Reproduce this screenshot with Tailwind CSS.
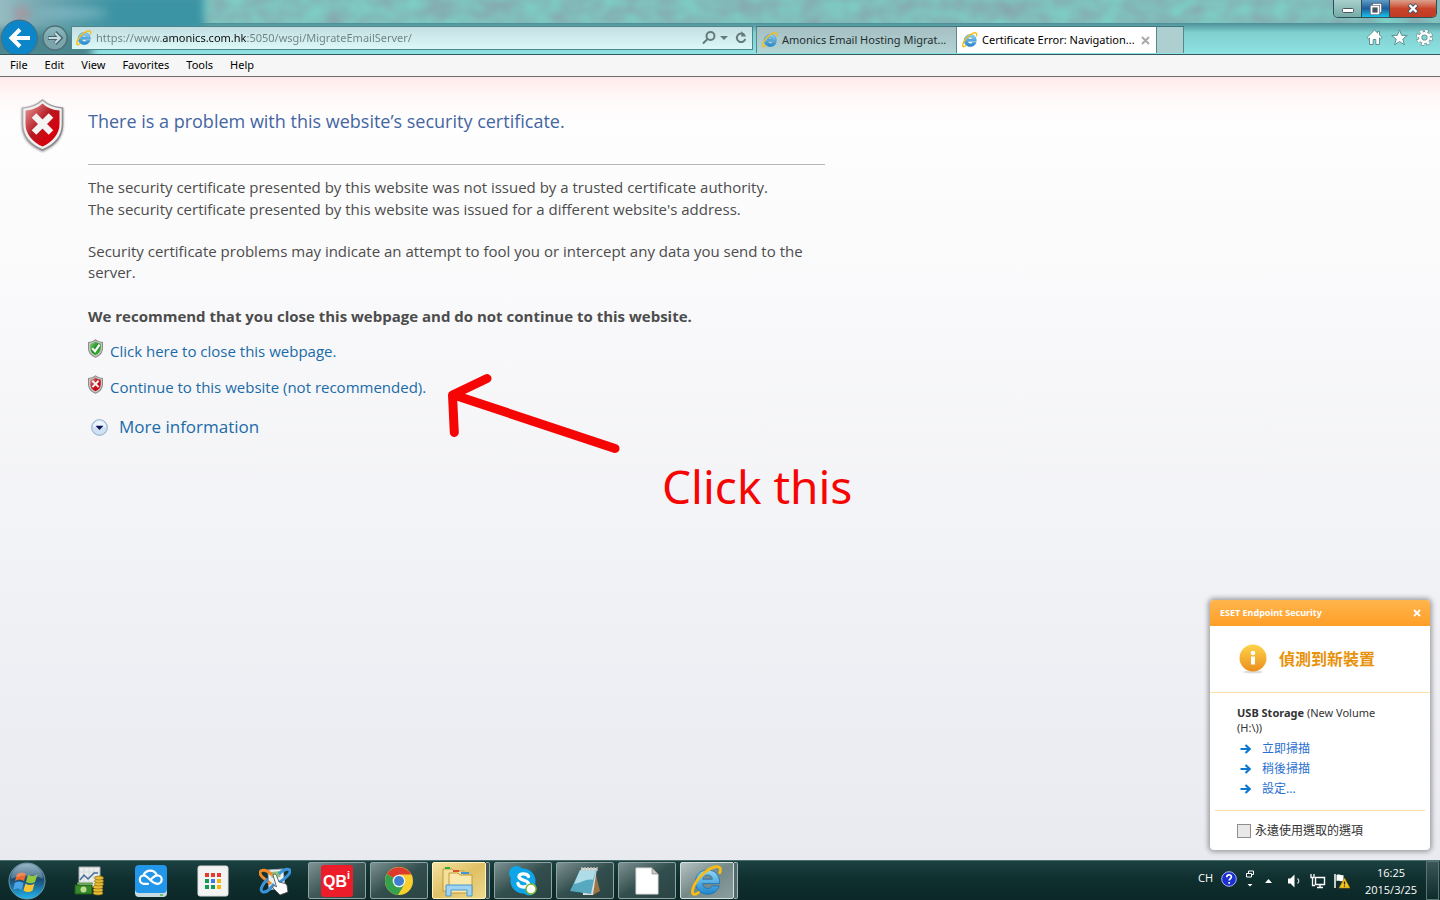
<!DOCTYPE html>
<html lang="en">
<head>
<meta charset="utf-8">
<title>Certificate Error: Navigation Blocked</title>
<script src="https://cdn.jsdelivr.net/npm/@tailwindcss/browser@4"></script>
</head>
<body class="flex h-screen flex-col overflow-hidden bg-[#0f2b2b] font-['Noto_Sans','Noto_Sans_CJK_TC',sans-serif] text-xs text-black">

<svg class="absolute size-0" aria-hidden="true">
  <defs>
    <linearGradient id="ieBlue" x1="0" y1="0" x2="0" y2="1"><stop offset="0" stop-color="#8fd8f8"/><stop offset="1" stop-color="#1f86cf"/></linearGradient>
    <linearGradient id="redShield" x1="0" y1="0" x2="1" y2="1"><stop offset="0" stop-color="#e9a0a0"/><stop offset=".45" stop-color="#b51a22"/><stop offset=".75" stop-color="#d8000c"/><stop offset="1" stop-color="#a30008"/></linearGradient>
    <linearGradient id="greenShield" x1="0" y1="0" x2="1" y2="1"><stop offset="0" stop-color="#8fd08a"/><stop offset=".5" stop-color="#1f8f1f"/><stop offset="1" stop-color="#3fc23a"/></linearGradient>
    <linearGradient id="silver" x1="0" y1="0" x2="1" y2="1"><stop offset="0" stop-color="#b9b9b9"/><stop offset="1" stop-color="#7d7d7d"/></linearGradient>
    <linearGradient id="orb" x1="0" y1="0" x2="0" y2="1"><stop offset="0" stop-color="#7ea6b8"/><stop offset=".45" stop-color="#1b4a70"/><stop offset="1" stop-color="#22b5ee"/></linearGradient>
    <linearGradient id="amber" x1="0" y1="0" x2="0" y2="1"><stop offset="0" stop-color="#ffd34a"/><stop offset="1" stop-color="#ea8f1e"/></linearGradient>
  </defs>
  <symbol id="ie" viewBox="0 0 32 32">
    <path d="M28.6 18.6H11.6c.2 3 2.3 4.800 5 4.800 2 0 3.500-.9 4.300-2.500h7.300c-1.500 5-6 8.300-11.600 8.300C9.500 29.200 4.400 24.200 4.400 17.200S9.500 5 16.600 5c7.300 0 12.400 5 12 13.600zM11.800 14.200h9.600c-.3-2.600-2.200-4.300-4.700-4.300s-4.500 1.700-4.900 4.300z" fill="url(#ieBlue)" stroke="#1b6fb0" stroke-width=".8"/>
    <path d="M7.500 27.500c-3.500 3-6.500 2.600-6-1.500C2.300 18.500 12 6.500 21.500 2.600c5.500-2.200 9.500-.8 7.300 5.200" fill="none" stroke="#f6bd16" stroke-width="2.800" stroke-linecap="round"/>
  </symbol>
  <symbol id="shieldRed" viewBox="0 0 43 52">
    <path d="M21.500 1C15 7 8 8.500 1.500 9v16c0 12 8 21 20 26 12-5 20-14 20-26V9C35 8.500 28 7 21.500 1z" fill="#f0f0f0" stroke="url(#silver)" stroke-width="1.600"/>
    <path d="M21.500 4.500C16 9.500 10 11 4.500 11.500V25c0 10 7 18 17 22.500C31.500 43 38.500 35 38.500 25V11.500C33 11 27 9.500 21.500 4.500z" fill="url(#redShield)"/>
    <path d="M13 16.500l17 17m0-17l-17 17" stroke="#f3f3f3" stroke-width="6.500"/>
  </symbol>
  <symbol id="shieldRedSmall" viewBox="0 0 43 52">
    <path d="M21.500 1C15 7 8 8.500 1.500 9v16c0 12 8 21 20 26 12-5 20-14 20-26V9C35 8.500 28 7 21.500 1z" fill="#c9c9c9" stroke="#8c8c8c" stroke-width="3"/>
    <path d="M21.500 6C16 10.500 11 12 6.500 12.500V25c0 9 6 16 15 20C30.500 41 36.500 34 36.500 25V12.500C32 12 27 10.500 21.500 6z" fill="url(#redShield)"/>
    <path d="M12.500 15.500l18 18m0-18l-18 18" stroke="#f3f3f3" stroke-width="6"/>
  </symbol>
  <symbol id="shieldGreen" viewBox="0 0 43 52">
    <path d="M21.500 1C15 7 8 8.500 1.500 9v16c0 12 8 21 20 26 12-5 20-14 20-26V9C35 8.500 28 7 21.500 1z" fill="#c9c9c9" stroke="#8c8c8c" stroke-width="3"/>
    <path d="M21.500 6C16 10.500 11 12 6.500 12.500V25c0 9 6 16 15 20C30.500 41 36.500 34 36.500 25V12.500C32 12 27 10.500 21.500 6z" fill="url(#greenShield)"/>
    <path d="M12 25l8 9 13-19" fill="none" stroke="#fff" stroke-width="6"/>
  </symbol>
  <symbol id="arrowRight" viewBox="0 0 11 10"><path d="M0 5h8M5 1l4.200 4L5 9" fill="none" stroke="#0a78d0" stroke-width="2.200"/></symbol>
</svg>

<header class="relative isolate flex h-[55px] shrink-0 overflow-hidden border-b border-[#35565a] bg-[#84c9c5]">
  <svg class="absolute inset-0 -z-10 h-full w-full" aria-hidden="true">
    <defs>
      <filter id="glass" x="0" y="0" width="100%" height="100%" color-interpolation-filters="sRGB">
        <feTurbulence type="fractalNoise" baseFrequency=".04 .055" numOctaves="2" seed="8"/>
        <feColorMatrix values=".05 0 0 0 .48  -.22 0 0 0 .85  -.14 0 0 0 .8  0 0 0 0 1"/>
      </filter>
      <linearGradient id="strip" x1="0" y1="0" x2="0" y2="1"><stop offset="0" stop-color="#4d8f97"/><stop offset=".3" stop-color="#7fd0cf"/><stop offset="1" stop-color="#8fe4e4"/></linearGradient>
      <linearGradient id="ghost" x1="0" y1="0" x2="1" y2="0"><stop offset="0" stop-color="#a5c5c9"/><stop offset=".25" stop-color="#7aaab3"/><stop offset=".6" stop-color="#3c93a3"/><stop offset="1" stop-color="#3a94a4"/></linearGradient>
      <filter id="soft" x="-20%" y="-60%" width="140%" height="220%"><feGaussianBlur stdDeviation="4"/></filter>
    </defs>
    <rect width="100%" height="26" filter="url(#glass)"/>
    <rect y="23" width="100%" height="32" fill="url(#strip)"/>
    <rect x="-20" y="-6" width="224" height="38" fill="url(#ghost)" filter="url(#soft)"/>
    <rect x="-20" y="30" width="112" height="30" fill="#4c858d" filter="url(#soft)"/>
    <circle cx="22" cy="14" r="8" fill="#b08d96" opacity=".7" filter="url(#soft)"/>
    <ellipse cx="72" cy="13" rx="36" ry="4" fill="#8fc4d0" opacity=".6" filter="url(#soft)"/>
  </svg>

  <nav class="flex w-[71px] shrink-0 items-start gap-1 pt-[19px]" aria-label="History">
    <button class="size-[38px] shrink-0" aria-label="Back">
      <svg viewBox="0 0 38 38" class="size-full"><circle cx="19.500" cy="19" r="18" fill="#0c86c8" stroke="#4b6d7c" stroke-width="1"/><path d="M30 19H12.500M20 10.500L11.500 19l8.500 8.500" fill="none" stroke="#fff" stroke-width="4"/></svg>
    </button>
    <button class="mt-[6px] size-[26px] shrink-0" aria-label="Forward">
      <svg viewBox="0 0 26 26" class="size-full"><circle cx="13" cy="13" r="12" fill="#ffffff44" stroke="#4e6f76" stroke-width="1.400"/><path d="M6 13h12M13 7.500l5.500 5.500-5.500 5.500" fill="none" stroke="#43666c" stroke-width="4"/><path d="M6.500 13H18M13 8l5 5-5 5" fill="none" stroke="#c7dcde" stroke-width="2"/></svg>
    </button>
  </nav>

  <form class="mt-[26px] flex h-6 min-w-0 flex-1 items-center border border-[#4f868b] bg-linear-to-b from-[#c4dfe2] to-[#dcf8f8] pl-1 pr-1">
    <svg class="size-4 shrink-0"><use href="#ie"/></svg>
    <input type="text" aria-label="Address" value="https://www.amonics.com.hk:5050/wsgi/MigrateEmailServer/" class="ml-1 min-w-0 flex-1 bg-[linear-gradient(90deg,#6c8083_0_67px,#0a0a0a_67px_151px,#6c8083_151px)] bg-clip-text text-[11px] text-transparent outline-none">
    <button type="button" class="flex h-full items-center" aria-label="Search"><svg class="size-4" viewBox="0 0 16 16" fill="none" stroke="#647a7c" stroke-width="2"><circle cx="10.500" cy="6" r="4"/><path d="M7.500 9L3 13.500"/></svg></button>
    <button type="button" class="flex h-full w-4 items-center justify-center" aria-label="Address list"><svg class="h-1 w-2" viewBox="0 0 8 4"><path d="M0 0h8L4 4z" fill="#647a7c"/></svg></button>
    <button type="button" class="flex h-full items-center" aria-label="Refresh"><svg class="size-4" viewBox="0 0 16 16"><path d="M12.500 5A4.300 4.300 0 1 0 13.300 9" fill="none" stroke="#647a7c" stroke-width="2"/><path d="M9.300 6.500V1l5 5.500z" fill="#647a7c"/></svg></button>
  </form>

  <div class="ml-[3px] mt-[26px] flex h-[27px] shrink-0 border-t border-[#3d777d]" role="tablist">
    <button role="tab" aria-selected="false" class="flex w-[200px] items-center gap-1 border-l border-[#528a8f] bg-linear-to-b from-[#a5bec2] to-[#b3d5d4] pl-[5px] text-left text-[11px] text-[#1f2f30]">
      <svg class="size-4 shrink-0"><use href="#ie"/></svg><span class="whitespace-nowrap">Amonics Email Hosting Migrat...</span>
    </button>
    <div class="flex w-[200px] items-center border-l border-[#528a8f] bg-white pl-[5px]">
      <button role="tab" aria-selected="true" class="flex items-center gap-1 text-[11px]"><svg class="size-4 shrink-0"><use href="#ie"/></svg><span class="w-[156px] whitespace-nowrap text-left">Certificate Error: Navigation...</span></button>
      <button class="ml-[3px]" aria-label="Close tab"><svg class="size-[9px]" viewBox="0 0 9 9"><path d="M1 1l7 7m0-7L1 8" stroke="#a9a9a9" stroke-width="2"/></svg></button>
    </div>
    <button class="w-7 border-x border-[#528a8f] bg-[#adcfcf]" aria-label="New tab"></button>
  </div>

  <div class="flex w-[256px] shrink-0 flex-col items-end">
    <div class="mr-[3px] flex h-[18px] overflow-hidden rounded-b-[5px] border border-t-0 border-[#2d4f55]">
      <button class="flex w-[28px] items-center justify-center border-r border-[#2d4f55] bg-linear-to-b from-[#a8cfcb] to-[#76aba8]" aria-label="Minimize"><svg class="h-[18px] w-3" viewBox="0 0 12 18"><rect x=".5" y="8.500" width="11" height="4" rx="1" fill="#fff" stroke="#4a5560"/></svg></button>
      <button class="flex w-[27px] items-center justify-center bg-linear-to-b from-[#5f9dc4] via-[#1d5d9c] to-[#10c4ee]" aria-label="Restore"><svg class="size-3" viewBox="0 0 12 12" fill="none"><path d="M3.500 3V1.500h7v7H9" stroke="#4a5560" stroke-width="3"/><path d="M3.500 3V1.500h7v7H9" stroke="#fff" stroke-width="1.500"/><rect x="1.500" y="3.500" width="7" height="7" fill="#456" stroke="#4a5560" stroke-width="3"/><rect x="1.500" y="3.500" width="7" height="7" stroke="#fff" stroke-width="1.800"/></svg></button>
      <button class="flex w-[47px] items-center justify-center border-l border-[#2d4f55] bg-linear-to-b from-[#dba08e] via-[#c9442a] to-[#c23a22]" aria-label="Close"><svg class="h-[11px] w-3" viewBox="0 0 12 11"><path d="M2 1.500l8 8m0-8l-8 8" stroke="#4a5560" stroke-width="4.200"/><path d="M2.500 2l7 7m0-7l-7 7" stroke="#fff" stroke-width="2.400"/></svg></button>
    </div>
    <div class="mr-[7px] mt-[11px] flex gap-2 text-white">
      <button aria-label="Home"><svg class="size-[17px]" viewBox="0 0 17 17"><path d="M8.500 1L1 8.500l1.500 1.300 1-.9V15.500h3.700v-5h2.600v5h3.700V8.900l1 .9L16 8.500l-2.500-2.600V2.500h-2v1.400z" fill="#fff" stroke="#5d8f92"/></svg></button>
      <button aria-label="Favorites"><svg class="size-[17px]" viewBox="0 0 17 17"><path d="M8.500.8l2.100 5.500 5.700.2-4.500 3.600 1.600 5.700-4.900-3.300-4.900 3.300 1.600-5.700L.7 6.500l5.700-.2z" fill="#fff" stroke="#5d8f92"/></svg></button>
      <button aria-label="Tools"><svg class="size-[17px]" viewBox="0 0 17 17"><circle cx="8.500" cy="8.500" r="6.500" fill="none" stroke="#6e9092" stroke-width="4" stroke-dasharray="3.100 2"/><circle cx="8.500" cy="8.500" r="4.300" fill="none" stroke="#6e9092" stroke-width="4"/><circle cx="8.500" cy="8.500" r="6.500" fill="none" stroke="#fff" stroke-width="2.600" stroke-dasharray="2.500 2.600"/><circle cx="8.500" cy="8.500" r="4.300" fill="none" stroke="#fff" stroke-width="2.400"/></svg></button>
    </div>
  </div>
</header>

<nav class="flex h-[22px] shrink-0 items-center gap-[17px] border-b border-[#6d6d6d] bg-[#f6f6f6] pl-[10px] text-[11px]" aria-label="Menu bar">
  <button>File</button><button>Edit</button><button>View</button><button>Favorites</button><button>Tools</button><button>Help</button>
</nav>

<main class="relative min-h-0 flex-1 bg-[linear-gradient(180deg,#ffeaea_0,#fff9f9_22px,#fefefe_45px,#e9eaf0_100%)]">
  <div class="flex gap-6 pl-[21px] pt-[22px]">
    <svg class="h-[52px] w-[43px] shrink-0 drop-shadow-[0_1px_1px_#0006]"><use href="#shieldRed"/></svg>
    <article class="max-w-[737px] flex-1 font-['Open_Sans',sans-serif] text-[15px] leading-[21px] text-[#4c4c4c]">
      <h1 class="border-b border-[#b5b5bb] pb-[31px] pt-[10px] text-[18px] leading-[24px] text-[#4465a2]">There is a problem with this website’s security certificate.</h1>
      <p class="pt-[11px] leading-[22px]">The security certificate presented by this website was not issued by a trusted certificate authority.<br>The security certificate presented by this website was issued for a different website's address.</p>
      <p class="pt-[21px]">Security certificate problems may indicate an attempt to fool you or intercept any data you send to the server.</p>
      <p class="pt-[23px] font-bold">We recommend that you close this webpage and do not continue to this website.</p>
      <ul class="text-[#1a6ba8]">
        <li class="flex gap-[7px] pt-[14px]"><svg class="-mt-[2px] h-[19px] w-[15px] shrink-0"><use href="#shieldGreen"/></svg><a href="#">Click here to close this webpage.</a></li>
        <li class="flex gap-[7px] pt-[15px]"><svg class="-mt-[2px] h-[19px] w-[15px] shrink-0"><use href="#shieldRedSmall"/></svg><a href="#">Continue to this website (not recommended).</a></li>
      </ul>
      <button class="mt-[17px] flex items-center gap-[11px] pl-[3px] text-[17px] leading-6 text-[#1a6ba8]">
        <svg class="size-[17px]" viewBox="0 0 17 17"><circle cx="8.500" cy="8.500" r="7.800" fill="#cfe2f4" stroke="#8ba6c6"/><path d="M2 8a6.500 6.500 0 0 1 13 0z" fill="#edf5fc"/><path d="M4.500 6.800h8l-4 4.200z" fill="#101058"/></svg>
        More information
      </button>
    </article>
  </div>

  <!-- Hand-drawn annotation over the page -->
  <svg class="absolute left-[440px] top-[290px] h-[100px] w-[190px]" viewBox="0 0 190 100" fill="none" stroke="#f60505" stroke-width="9" stroke-linecap="round" stroke-linejoin="round" aria-hidden="true"><path d="M47 11.500L12.500 28l1.800 37.500M14 28L175 81.500"/></svg>
  <p class="absolute left-[662px] top-[379px] whitespace-nowrap text-[46px] leading-[60px] text-[#f60505]">Click this</p>

  <section class="absolute bottom-[10px] right-[10px] w-[220px] rounded-[4px] bg-white shadow-[0_0_5px_2px_#0005]" aria-label="ESET Endpoint Security">
    <header class="flex h-[26px] items-center justify-between rounded-t-[4px] bg-linear-to-b from-[#ffb54b] to-[#ff9f26] pl-[10px] pr-[9px] text-[9px] font-bold text-white">
      <span>ESET Endpoint Security</span>
      <button aria-label="Close notification"><svg class="size-2" viewBox="0 0 8 8"><path d="M1 1l6 6m0-6L1 7" stroke="#fff" stroke-width="1.800"/></svg></button>
    </header>
    <div class="flex h-[67px] items-center gap-3 border-b border-[#fbdf9f] pl-[29px]">
      <svg class="h-[30px] w-7" viewBox="0 0 28 30"><ellipse cx="14" cy="28" rx="10" ry="1.500" fill="#ddd"/><circle cx="14" cy="14" r="13.500" fill="url(#amber)"/><circle cx="14" cy="9" r="2.300" fill="#fff"/><path d="M12 12.500h4v8h-4z" fill="#fff"/></svg>
      <h2 class="text-base font-bold text-[#e8920c]">偵測到新裝置</h2>
    </div>
    <div class="mx-[5px] h-[118px] border-b border-[#fbdf9f] pl-[22px] pt-3 leading-[15px] text-[#333]">
      <p class="whitespace-nowrap text-[11px]"><b>USB Storage</b> (New Volume<br>(H:\))</p>
      <ul class="pt-1 leading-5 text-[#2a6fd0]">
        <li class="flex items-center gap-[10px] pl-[3px]"><svg class="h-[10px] w-3"><use href="#arrowRight"/></svg><a href="#">立即掃描</a></li>
        <li class="flex items-center gap-[10px] pl-[3px]"><svg class="h-[10px] w-3"><use href="#arrowRight"/></svg><a href="#">稍後掃描</a></li>
        <li class="flex items-center gap-[10px] pl-[3px]"><svg class="h-[10px] w-3"><use href="#arrowRight"/></svg><a href="#">設定...</a></li>
      </ul>
    </div>
    <label class="flex h-[39px] items-center gap-1 pl-[27px] text-[#333]"><input type="checkbox" class="size-[14px] appearance-none border border-[#8e8e8e] bg-[#e8e8e8]">永遠使用選取的選項</label>
  </section>
</main>

<footer class="flex h-10 shrink-0 items-stretch border-t border-[#4c7171] bg-linear-to-b from-[#1c4040] via-[#0f2e2e] to-[#0c2828] text-white">
  <button class="flex w-[58px] items-center justify-center pr-1" aria-label="Start">
    <svg class="size-[38px]" viewBox="0 0 38 38"><circle cx="19" cy="19" r="18" fill="url(#orb)" stroke="#6e9aa8"/><path d="M9 12c3-2 6-2 9 0l-2 7c-3-2-6-2-9 0z" fill="#ee6a2c"/><path d="M20 12.500c3 2 6 2 9.500 0l-2.500 7.500c-3 2-6 1.500-9 0z" fill="#94c83c"/><path d="M6.500 21c3-2 6-2 9 0l-2 7c-3-2-5-2-8 0z" fill="#4ba4e6"/><path d="M17.500 21.500c3 2 6 2 9 0l-2 7c-3 2-6 2-9 0z" fill="#fbc52f"/><path d="M3 17a16 15 0 0 1 32 0c-8-5-20-5-32 0z" fill="#ffffff38"/></svg>
  </button>
  <button class="flex w-[62px] items-center justify-center" aria-label="Accounting"><svg class="size-8" viewBox="0 0 32 32"><path d="M6 2h21v20H6z" fill="#eceeee" stroke="#aaa"/><path d="M6 7h21M6 12h21M6 17h21M11 2v20M16 2v20M21 2v20" stroke="#c8cccc" stroke-width=".6"/><path d="M7 15l4-5 4 4 6-6h4" fill="none" stroke="#466c9c" stroke-width="1.500"/><path d="M2 20h17v9H2z" fill="#37892c" stroke="#1d5b16"/><circle cx="10.500" cy="24.500" r="3" fill="#bcdc8c"/><path d="M4 18.500h16" stroke="#66a34f" stroke-width="2"/><g fill="#e9bd32" stroke="#8d6912" stroke-width=".7"><ellipse cx="25" cy="28" rx="5" ry="2"/><ellipse cx="25" cy="25" rx="5" ry="2"/><ellipse cx="25" cy="22" rx="5" ry="2"/><ellipse cx="26" cy="19" rx="4.500" ry="2"/><ellipse cx="26" cy="16" rx="4.500" ry="2"/><ellipse cx="26" cy="13" rx="4.500" ry="2"/></g></svg></button>
  <button class="flex w-[62px] items-center justify-center" aria-label="Cloud drive"><svg class="size-8" viewBox="0 0 32 32"><rect y="3" width="32" height="29" rx="4" fill="#c9dbe2"/><rect width="32" height="28" rx="4" fill="#2296e8"/><path d="M8.500 10.500A7 7 0 0 1 21.500 9.500M13 18.800H9a4.200 4.200 0 0 1 0-8.400c4 0 7 8.400 13.500 8.400a4.200 4.200 0 0 0 0-8.400c-3 0-4.500 2-6 3.500" fill="none" stroke="#fff" stroke-width="2.200" stroke-linecap="round"/><path d="M25 30h3" stroke="#57b847" stroke-width="1.500"/></svg></button>
  <button class="flex w-[62px] items-center justify-center" aria-label="App launcher"><svg class="size-8" viewBox="0 0 32 32"><rect x="1" y="1" width="30" height="30" rx="2" fill="#f3f3f3" stroke="#ddd"/><path d="M8 8h4v4H8zM14 8h4v4h-4zM20 8h4v4h-4z" fill="#e33b2d"/><path d="M8 14h4v4H8zM8 20h4v4H8z" fill="#159a55"/><path d="M14 14h4v4h-4z" fill="#3b78e8"/><path d="M20 14h4v4h-4zM20 20h4v4h-4z" fill="#f7b60b"/><path d="M14 20h4v4h-4z" fill="#159a55"/></svg></button>
  <button class="flex w-[62px] items-center justify-center" aria-label="Touch setup"><svg class="size-8" viewBox="0 0 32 32"><path d="M9 5l15-1 2 18-16 3z" fill="#edf3f4" stroke="#9ab"/><path d="M12 7l9-1 .500 6-9 1z" fill="#8cc07c"/><path d="M13 10C8 4 1 4 1 8s6 6 11 11" fill="none" stroke="#f28a2a" stroke-width="3"/><path d="M20 9c5-6 12-6 11-2S24 15 18 19M9 14C3 19 0 26 4 27s8-4 11-8" fill="none" stroke="#3b94d8" stroke-width="3"/><path d="M14 10c1-1.500 3-1 3.500.5L20 17l6 1.500c1.500.5 2 1.500 2.200 3L29 27l-8 3-7-7c-1-1.500.5-3 2-2l1.500.8z" fill="#fff" stroke="#444" stroke-width=".8"/></svg></button>

  <div class="flex w-[62px] px-[2px] py-px"><button class="flex flex-1 items-center justify-center rounded-[2px] border border-[#8fa3a3] bg-linear-to-br from-[#7e9292] via-[#3f5858] to-[#2a4444]" aria-label="QBi"><svg class="size-8" viewBox="0 0 32 32"><rect width="32" height="32" rx="3" fill="#ed1c2a"/><text x="2" y="22" font-family="Liberation Sans, sans-serif" font-size="16" font-weight="700" fill="#fff">QB</text><text x="26" y="14" font-family="Liberation Sans, sans-serif" font-size="11" font-weight="700" fill="#fff">i</text></svg></button></div>
  <div class="flex w-[62px] px-[2px] py-px"><button class="flex flex-1 items-center justify-center rounded-[2px] border border-[#8fa3a3] bg-linear-to-br from-[#7e9292] via-[#334e4e] to-[#2a4444]" aria-label="Chrome"><svg class="size-7" viewBox="0 0 28 28"><circle cx="14" cy="14" r="14" fill="#f9cf2e"/><path d="M14 14L1.900 7A14 14 0 0 1 26.100 7.500H14z" fill="#dd3a2d"/><path d="M14 14L1.900 7A14 14 0 0 0 13 28l6-10z" fill="#36a14c"/><circle cx="14" cy="14" r="6.300" fill="#f2f2f2"/><circle cx="14" cy="14" r="5" fill="#3f7fd0"/></svg></button></div>
  <div class="flex w-[62px] py-px px-[2px]"><button class="flex flex-1 items-center justify-center rounded-[2px] border border-[#fff3c0] bg-linear-to-br from-[#f4e2a0] via-[#dfc065] to-[#efd98c]" aria-label="Explorer"><svg class="h-8 w-9" viewBox="0 0 36 32"><path d="M2 4h9l2 2h10v20H2z" fill="#f5e09a" stroke="#c09a3c"/><path d="M4 3h5" stroke="#2cae3a" stroke-width="2"/><path d="M8 8h9l2 2h12v18H8z" fill="#fae9ad" stroke="#c09a3c"/><path d="M12 6h6" stroke="#d8502c" stroke-width="2"/><path d="M20 8h8" stroke="#3c98dc" stroke-width="2"/><path d="M5 31V20h26v11h-5v-6H10v6z" fill="#9fd3f2" stroke="#4a98cb"/></svg></button><span class="w-1 rounded-r-[2px] border border-l-0 border-[#8fa3a3] bg-[#3c5454]"></span></div>
  <div class="flex w-[62px] px-[2px] py-px"><button class="flex flex-1 items-center justify-center rounded-[2px] border border-[#8fa3a3] bg-linear-to-br from-[#7e9292] via-[#334e4e] to-[#2a4444]" aria-label="Skype"><svg class="size-8" viewBox="0 0 32 32"><g fill="#10a5e8"><circle cx="16" cy="16" r="12.500"/><circle cx="9.500" cy="8.500" r="7.500"/><circle cx="22" cy="23" r="7.500"/></g><path d="M21.500 11.500c-1-3-9.500-4-9.500 0 0 4.500 9.500 3 9.500 7.500 0 4-9.500 4-10.500-.5" fill="none" stroke="#fff" stroke-width="3.400" stroke-linecap="round"/><circle cx="24" cy="24" r="5" fill="#fff" stroke="#7cb828" stroke-width="1.400"/></svg></button></div>
  <div class="flex w-[62px] px-[2px] py-px"><button class="flex flex-1 items-center justify-center rounded-[2px] border border-[#8fa3a3] bg-linear-to-br from-[#7e9292] via-[#334e4e] to-[#2a4444]" aria-label="Notepad"><svg class="size-8" viewBox="0 0 32 32"><path d="M26 6l5 20-7 4z" fill="#9a7445"/><path d="M12 3h16l-4 27H14z" fill="#ddd"/><path d="M11 5h16l-5 24L1 26z" fill="#57a9c0"/><path d="M11 5h16l-3 10C18 13 12 18 5 19z" fill="#aedde8"/><path d="M13 2v4M16 2v4M19 2v4M22 2v4M25 2v4M28 2v4" stroke="#c5c5c5" stroke-width="1.300"/></svg></button></div>
  <div class="flex w-[62px] px-[2px] py-px"><button class="flex flex-1 items-center justify-center rounded-[2px] border border-[#8fa3a3] bg-linear-to-br from-[#7e9292] via-[#334e4e] to-[#2a4444]" aria-label="Document"><svg class="h-7 w-6" viewBox="0 0 24 28"><path d="M1 1h16l6 6v20H1z" fill="#fff" stroke="#ddd"/><path d="M17 1v6h6z" fill="#c6c6c6" stroke="#888" stroke-width=".7"/></svg></button></div>
  <div class="flex w-[62px] py-px px-[2px]"><button class="flex flex-1 items-center justify-center rounded-[2px] border border-[#d5dfdf] bg-linear-to-br from-[#b5c2c2] via-[#758989] to-[#8b9e9e]" aria-label="Internet Explorer"><svg class="size-8"><use href="#ie"/></svg></button><span class="w-1 rounded-r-[2px] border border-l-0 border-[#a5b6b6] bg-[#51696a]"></span></div>

  <div class="ml-auto flex items-center font-['Open_Sans',sans-serif] text-[11px]">
    <button class="w-[23px] pb-1 text-left">CH</button>
    <button class="mb-1 mr-[9px]" aria-label="Help"><svg class="size-4" viewBox="0 0 16 16"><circle cx="8" cy="8" r="7.300" fill="#1b2fd0" stroke="#a9b4f4"/><path d="M5.800 6.200c0-3 4.600-3 4.600-.2 0 1.500-2.200 1.700-2.200 3.500M8.200 11v1.800" fill="none" stroke="#fff" stroke-width="1.700"/></svg></button>
    <button class="mb-1 mr-[11px]" aria-label="Language bar"><svg class="h-[18px] w-2" viewBox="0 0 8 18"><path d="M2.500 3V1h5v3.500H6M.5 3.500h5V7h-5z" fill="none" stroke="#fff"/><path d="M1.500 14h5L4 16.500z" fill="#fff"/></svg></button>
    <button class="mr-[15px]" aria-label="Show hidden icons"><svg class="h-1 w-[7px]" viewBox="0 0 7 4"><path d="M0 4h7L3.500 0z" fill="#fff"/></svg></button>
    <button class="mr-[9px]" aria-label="Volume"><svg class="h-4 w-[14px]" viewBox="0 0 14 16"><path d="M1 5.500h2.500l4-4v13l-4-4H1z" fill="#fff"/><path d="M10.500 5.500c1.500 1.500 1.500 3.500 0 5" fill="none" stroke="#ccd" stroke-width="1.200"/></svg></button>
    <button class="mr-2" aria-label="Network"><svg class="size-4" viewBox="0 0 16 16" fill="none" stroke="#fff"><path d="M5.500 4.500h9v7h-9zM7 14.500h6M10 12v2" stroke-width="1.400"/><path d="M1 1v3.500h3V1M2.500 5v7.500H5" stroke-width="1.300"/></svg></button>
    <button class="mr-[14px]" aria-label="Action center"><svg class="size-4" viewBox="0 0 16 16"><path d="M1 1v14" stroke="#fff" stroke-width="1.500"/><path d="M2.500 2c3-1.500 4 1 7 0v6c-3 1-4-1-7 0z" fill="#fff"/><path d="M10.500 5L16 15H5z" fill="#f8c81c" stroke="#a87d08" stroke-width=".6"/><path d="M10.500 8.500v3M10.500 12.500v1.300" stroke="#222" stroke-width="1.300"/></svg></button>
    <time class="mr-2 w-[54px] text-center leading-[17px]">16:25<br>2015/3/25</time>
    <button class="mr-px h-full w-[13px] border border-[#5b7474] bg-linear-to-b from-[#3a5656] to-[#0f2c2c]" aria-label="Show desktop"></button>
  </div>
</footer>
</body>
</html>
